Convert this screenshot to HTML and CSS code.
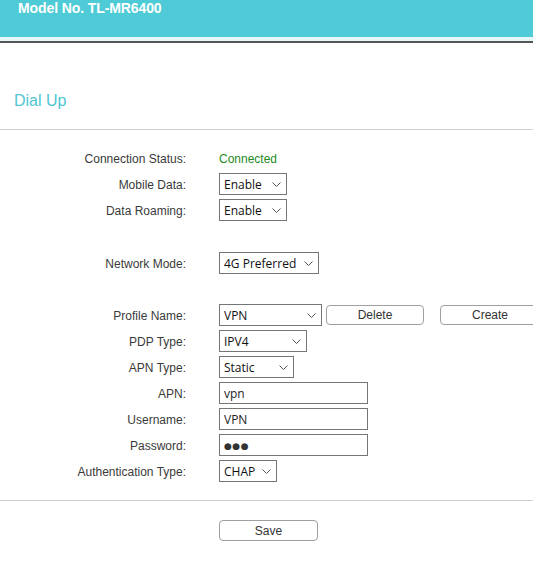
FILE: index.html
```html
<!DOCTYPE html>
<html>
<head>
<meta charset="utf-8">
<title>Dial Up</title>
<link rel="stylesheet" href="styles.css">
</head>
<body>
<header class="top">
  <div class="model">Model No. TL-MR6400</div>
</header>
<div class="strip"></div>
<h1 class="title">Dial Up</h1>
<hr class="rule">
<form class="form">
  <div class="row">
    <label class="lbl">Connection Status:</label>
    <div class="ctl"><span class="status">Connected</span></div>
  </div>
  <div class="row">
    <label class="lbl">Mobile Data:</label>
    <div class="ctl"><div class="sel w68"><select><option>Enable</option></select><svg class="chev" width="9" height="5" viewBox="0 0 9 5"><polyline points="0.5,0.5 4.5,4.5 8.5,0.5" fill="none" stroke="#555" stroke-width="1"/></svg></div></div>
  </div>
  <div class="row">
    <label class="lbl">Data Roaming:</label>
    <div class="ctl"><div class="sel w68"><select><option>Enable</option></select><svg class="chev" width="9" height="5" viewBox="0 0 9 5"><polyline points="0.5,0.5 4.5,4.5 8.5,0.5" fill="none" stroke="#555" stroke-width="1"/></svg></div></div>
  </div>
  <div class="row gap-nm">
    <label class="lbl">Network Mode:</label>
    <div class="ctl"><div class="sel w100"><select><option>4G Preferred</option></select><svg class="chev" width="9" height="5" viewBox="0 0 9 5"><polyline points="0.5,0.5 4.5,4.5 8.5,0.5" fill="none" stroke="#555" stroke-width="1"/></svg></div></div>
  </div>
  <div class="row gap-pn">
    <label class="lbl">Profile Name:</label>
    <div class="ctl">
      <div class="sel w103"><select><option>VPN</option></select><svg class="chev" width="9" height="5" viewBox="0 0 9 5"><polyline points="0.5,0.5 4.5,4.5 8.5,0.5" fill="none" stroke="#555" stroke-width="1"/></svg></div>
      <button type="button" class="btn del">Delete</button>
      <button type="button" class="btn create">Create</button>
    </div>
  </div>
  <div class="row">
    <label class="lbl">PDP Type:</label>
    <div class="ctl"><div class="sel w88"><select><option>IPV4</option></select><svg class="chev" width="9" height="5" viewBox="0 0 9 5"><polyline points="0.5,0.5 4.5,4.5 8.5,0.5" fill="none" stroke="#555" stroke-width="1"/></svg></div></div>
  </div>
  <div class="row">
    <label class="lbl">APN Type:</label>
    <div class="ctl"><div class="sel w74"><select><option>Static</option></select><svg class="chev" width="9" height="5" viewBox="0 0 9 5"><polyline points="0.5,0.5 4.5,4.5 8.5,0.5" fill="none" stroke="#555" stroke-width="1"/></svg></div></div>
  </div>
  <div class="row">
    <label class="lbl">APN:</label>
    <div class="ctl"><input class="txt" type="text" value="vpn"></div>
  </div>
  <div class="row">
    <label class="lbl">Username:</label>
    <div class="ctl"><input class="txt" type="text" value="VPN"></div>
  </div>
  <div class="row">
    <label class="lbl">Password:</label>
    <div class="ctl"><div class="txt pw">●●●</div></div>
  </div>
  <div class="row">
    <label class="lbl">Authentication Type:</label>
    <div class="ctl"><div class="sel w58"><select><option>CHAP</option></select><svg class="chev" width="9" height="5" viewBox="0 0 9 5"><polyline points="0.5,0.5 4.5,4.5 8.5,0.5" fill="none" stroke="#555" stroke-width="1"/></svg></div></div>
  </div>
</form>
<hr class="rule rule-bottom">
<div class="actions">
  <button type="button" class="btn save">Save</button>
</div>
</body>
</html>
```

FILE: styles.css
```css
html, body {
  margin: 0;
  padding: 0;
  background: #fff;
  overflow: hidden;
  width: 533px;
  height: 565px;
}

body {
  font-family: "Liberation Sans", Arial, sans-serif;
  font-size: 12px;
  color: #333;
}

.top {
  height: 37px;
  background: #4ecbd6;
}

.model {
  padding-left: 18px;
  font-size: 14px;
  line-height: 17px;
  font-weight: bold;
  color: #fff;
  letter-spacing: -0.1px;
}

.strip {
  height: 4px;
  background: #e6f7f9;
  border-bottom: 2px solid #555;
}

.title {
  margin: 49px 0 0 0;
  padding-left: 14px;
  font-size: 16px;
  line-height: 18px;
  font-weight: normal;
  color: #4ec6d1;
}

.rule {
  border: 0;
  height: 1px;
  background: #cfcfcf;
  margin: 19px 0 0 0;
}

.form {
  margin-top: 15px;
}

.row {
  display: grid;
  grid-template-columns: 186px auto;
  column-gap: 33px;
  height: 26px;
  align-items: center;
}

.gap-nm {
  margin-top: 27px;
}

.gap-pn {
  margin-top: 26px;
}

.lbl {
  text-align: right;
  color: #3a3a3a;
  white-space: nowrap;
  padding-top: 1px;
}

.ctl {
  display: flex;
  align-items: center;
  white-space: nowrap;
}

.status {
  color: #1f8a1f;
  padding-top: 1px;
}

.sel {
  position: relative;
  height: 22px;
}

.sel select {
  -webkit-appearance: none;
  appearance: none;
  width: 100%;
  height: 22px;
  box-sizing: border-box;
  border: 1px solid #767676;
  border-radius: 0;
  background: #fff;
  padding: 1px 0 0 4px;
  margin: 0;
  font-family: "Open Sans", "Noto Sans", sans-serif;
  font-size: 12px;
  color: #111;
  outline: none;
}

.chev {
  position: absolute;
  right: 6px;
  top: 9px;
  pointer-events: none;
}

.w58 { width: 58px; }
.w68 { width: 68px; }
.w74 { width: 75px; }
.w88 { width: 88px; }
.w100 { width: 100px; }
.w103 { width: 103px; }

.txt {
  width: 149px;
  height: 22px;
  box-sizing: border-box;
  border: 1px solid #767676;
  border-radius: 0;
  padding: 1px 0 0 4px;
  margin: 0;
  font-family: "Open Sans", "Noto Sans", sans-serif;
  font-size: 12px;
  color: #222;
  background: #fff;
  outline: none;
}

.pw {
  display: flex;
  align-items: center;
  font-family: "DejaVu Sans", sans-serif;
  font-size: 9px;
  letter-spacing: 0.5px;
  color: #333;
}

.btn {
  height: 20px;
  box-sizing: border-box;
  border: 1px solid #a0a0a0;
  border-radius: 4px;
  background: #fff;
  font-family: "Liberation Sans", Arial, sans-serif;
  font-size: 12px;
  color: #333;
  padding: 0;
  margin: 0;
  cursor: pointer;
}

.del {
  width: 98px;
  margin-left: 4px;
}

.create {
  width: 100px;
  margin-left: 16px;
  flex-shrink: 0;
}

.rule-bottom {
  margin-top: 16px;
}

.actions {
  padding: 19px 0 0 219px;
}

.save {
  width: 99px;
  height: 21px;
}
```
